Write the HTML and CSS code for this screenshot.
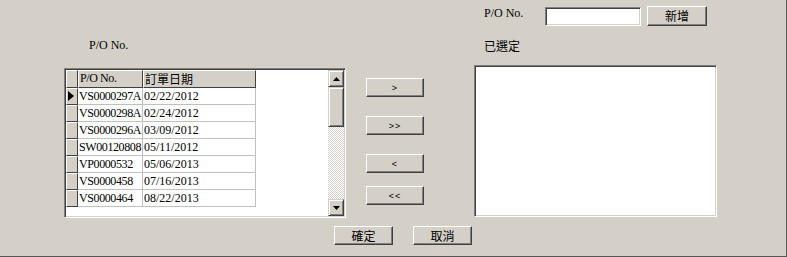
FILE: index.html
```html
<!DOCTYPE html>
<html>
<head>
    <title>P/O</title>
    <link rel="stylesheet" href="styles.css">
</head>
<body>
    <div class="top">
        <span class="lbl">P/O No.</span>
        <input class="txt" type="text">
        <button class="btn btn-add">新增</button>
    </div>
    <div class="main">
        <div class="left">
            <div class="cap cap-left">P/O No.</div>
            <div class="grid">
                <div class="cells">
                    <div class="hrow">
                        <div class="ind"></div>
                        <div class="hc c1">P/O No.</div>
                        <div class="hc c2 cjk">訂單日期</div>
                    </div>
                    <div class="row">
                        <div class="ind"><span class="cur"></span></div>
                        <div class="dc c1">VS0000297A</div>
                        <div class="dc c2">02/22/2012</div>
                    </div>
                    <div class="row">
                        <div class="ind"></div>
                        <div class="dc c1">VS0000298A</div>
                        <div class="dc c2">02/24/2012</div>
                    </div>
                    <div class="row">
                        <div class="ind"></div>
                        <div class="dc c1">VS0000296A</div>
                        <div class="dc c2">03/09/2012</div>
                    </div>
                    <div class="row">
                        <div class="ind"></div>
                        <div class="dc c1">SW00120808</div>
                        <div class="dc c2">05/11/2012</div>
                    </div>
                    <div class="row">
                        <div class="ind"></div>
                        <div class="dc c1">VP0000532</div>
                        <div class="dc c2">05/06/2013</div>
                    </div>
                    <div class="row">
                        <div class="ind"></div>
                        <div class="dc c1">VS0000458</div>
                        <div class="dc c2">07/16/2013</div>
                    </div>
                    <div class="row">
                        <div class="ind"></div>
                        <div class="dc c1">VS0000464</div>
                        <div class="dc c2">08/22/2013</div>
                    </div>
                </div>
                <div class="vscroll">
                    <div class="sbtn">
                        <svg width="7" height="4" viewBox="0 0 7 4"><polygon points="3.5,0 7,4 0,4" fill="#000"/></svg>
                    </div>
                    <div class="thumb"></div>
                    <div class="track"></div>
                    <div class="sbtn">
                        <svg width="7" height="4" viewBox="0 0 7 4"><polygon points="0,0 7,0 3.5,4" fill="#000"/></svg>
                    </div>
                </div>
            </div>
        </div>
        <div class="mid">
            <button class="btn btn-move">&gt;</button>
            <button class="btn btn-move gap">&gt;&gt;</button>
            <button class="btn btn-move gap">&lt;</button>
            <button class="btn btn-move gap-sm">&lt;&lt;</button>
        </div>
        <div class="right">
            <div class="cap cap-right cjk">已選定</div>
            <div class="listbox"></div>
        </div>
    </div>
    <div class="bottom">
        <button class="btn btn-ok">確定</button>
        <button class="btn btn-ok">取消</button>
    </div>
</body>
</html>
```

FILE: styles.css
```css
*{
    margin: 0;
    padding: 0;
    box-sizing: border-box;
}
body{
    width: 787px;
    height: 257px;
    overflow: hidden;
    background-color: #d4d0c8;
    border-right: 1px solid #555;
    border-bottom: 1px solid #555;
    font: 12px "Liberation Serif", "Noto Sans CJK TC", serif;
    color: #000;
}
.cjk{
    font-family: "Noto Sans CJK TC", sans-serif;
    font-size: 12px;
}
/* windows classic button */
.btn{
    display: flex;
    align-items: center;
    justify-content: center;
    background-color: #d4d0c8;
    border: 1px solid;
    border-color: #fff #404040 #404040 #fff;
    box-shadow: inset -1px -1px #808080;
    font: 12px/1 "Noto Sans CJK TC", sans-serif;
    color: #000;
}
.top{
    height: 36px;
    display: flex;
    align-items: flex-start;
    padding: 6px 0 0 484px;
}
.lbl{
    width: 61px;
    line-height: 14px;
}
.txt{
    width: 96px;
    height: 19px;
    margin-top: 1px;
    background: #fff;
    border: 1px solid;
    border-color: #808080 #fff #fff #808080;
    box-shadow: inset 1px 1px #404040, inset -1px -1px #d4d0c8;
    outline: none;
}
.btn-add{
    width: 60px;
    height: 20px;
    margin-left: 6px;
}
.main{
    height: 182px;
    display: flex;
    padding-left: 64px;
}
.left{
    width: 282px;
}
.cap{
    line-height: 14px;
}
.cap-left{
    height: 32px;
    padding: 2px 0 0 25px;
}
.cap-right{
    height: 29px;
    padding: 3px 0 0 10px;
}
.grid{
    height: 150px;
    display: flex;
    background: #fff;
    border: 1px solid;
    border-color: #808080 #fff #fff #808080;
    box-shadow: inset 1px 1px #404040, inset -1px -1px #d4d0c8;
    padding: 1px;
}
.cells{
    flex: 1;
}
.hrow{
    height: 18px;
    display: flex;
}
.row{
    height: 17px;
    display: flex;
}
.ind{
    width: 12px;
    position: relative;
    background: #d4d0c8;
    border: 1px solid;
    border-color: #fff #404040 #404040 #fff;
}
.cur{
    position: absolute;
    left: 1px;
    top: 2px;
    width: 0;
    height: 0;
    border-left: 6px solid #000;
    border-top: 5px solid transparent;
    border-bottom: 5px solid transparent;
}
.c1{
    width: 65px;
    letter-spacing: -0.4px;
}
.c2{
    width: 113px;
}
.hc{
    background: #d4d0c8;
    border: 1px solid;
    border-color: #fff #404040 #404040 #fff;
    padding-left: 1px;
    line-height: 15px;
    white-space: nowrap;
    overflow: hidden;
}
.hc.cjk{
    letter-spacing: 0;
}
.dc{
    border-right: 1px solid #c0c0c0;
    border-bottom: 1px solid #c0c0c0;
    padding-left: 1px;
    line-height: 16px;
    white-space: nowrap;
    overflow: hidden;
}
.vscroll{
    width: 16px;
    display: flex;
    flex-direction: column;
}
.sbtn, .thumb{
    background: #d4d0c8;
    border: 1px solid;
    border-color: #d4d0c8 #404040 #404040 #d4d0c8;
    box-shadow: inset 1px 1px #fff, inset -1px -1px #808080;
}
.sbtn{
    height: 17px;
    display: flex;
    align-items: center;
    justify-content: center;
}
.thumb{
    height: 40px;
}
.track{
    flex: 1;
    background: repeating-conic-gradient(#d4d0c8 0 25%, #fff 0 50%) 0 0/2px 2px;
}
.mid{
    width: 58px;
    margin-left: 20px;
    padding-top: 42px;
    display: flex;
    flex-direction: column;
}
.btn-move{
    height: 19px;
    font: 9px "Liberation Sans", sans-serif;
    letter-spacing: 1px;
}
.gap{
    margin-top: 19px;
}
.gap-sm{
    margin-top: 13px;
}
.right{
    width: 243px;
    margin-left: 50px;
}
.listbox{
    height: 152px;
    background: #fff;
    border: 1px solid;
    border-color: #808080 #fff #fff #808080;
    box-shadow: inset 1px 1px #404040, inset -1px -1px #d4d0c8;
}
.bottom{
    display: flex;
    gap: 20px;
    padding: 8px 0 0 334px;
}
.btn-ok{
    width: 59px;
    height: 19px;
}
```
